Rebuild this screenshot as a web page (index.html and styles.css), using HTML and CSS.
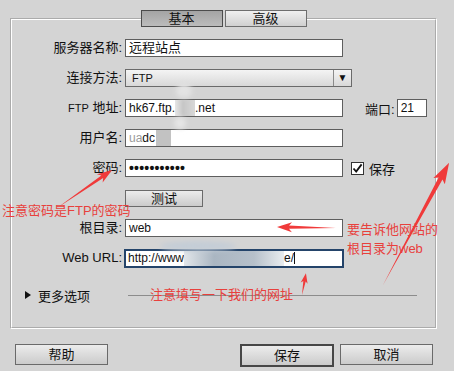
FILE: index.html
```html
<!DOCTYPE html>
<html>
<head>
  <meta charset="UTF-8">
  <title>站点设置 - 服务器</title>
  <link rel="stylesheet" href="styles.css">
</head>
<body>
  <div class="dialog">
    <fieldset class="panel">
      <legend class="tabs"><span class="tab tab-on">基本</span><span class="tab">高级</span></legend>

      <div class="form">
        <span class="lbl">服务器名称:</span>
        <div class="box cjk">远程站点</div>

        <span class="lbl">连接方法:</span>
        <div class="select">
          <span class="select-val">FTP</span>
          <span class="select-btn">&#9660;</span>
        </div>

        <span class="lbl"><small>FTP</small> 地址:</span>
        <div class="box">hk67.ftp.<span class="blot"></span>.net</div>
        <div class="extra port">
          <span>端口:</span>
          <div class="box box-port">21</div>
        </div>

        <span class="lbl">用户名:</span>
        <div class="box"><span class="faint">ua</span>dc<span class="blot blot-user"></span></div>

        <span class="lbl">密码:</span>
        <div class="box"><span class="dots">•••••••••••</span></div>
        <label class="extra check">
          <span class="check-box">
            <svg width="11" height="11" viewBox="0 0 11 11"><path d="M1.5 5.5 L4.2 8.6 L9.6 1.4" fill="none" stroke="#111" stroke-width="1.8"/></svg>
          </span>
          保存
        </label>

        <span class="lbl"></span>
        <button class="btn btn-test">测试</button>

        <span class="lbl">根目录:</span>
        <div class="box">web</div>

        <span class="lbl">Web URL:</span>
        <div class="box box-focus">http://www<span class="blot blot-url"></span>e/<span class="caret"></span></div>
      </div>

      <div class="more">
        <span class="tri"></span>
        <span class="more-text">更多选项</span>
        <span class="rule"></span>
      </div>
    </fieldset>

    <div class="actions">
      <button class="btn">帮助</button>
      <button class="btn btn-main">保存</button>
      <button class="btn">取消</button>
    </div>
  </div>

  <!-- red notes drawn over the screenshot -->
  <div class="notes">
    <svg class="marks" width="454" height="371" viewBox="0 0 454 371">
      <defs>
        <filter id="smear" x="-50%" y="-50%" width="200%" height="200%"><feGaussianBlur stdDeviation="2.5"/></filter>
      </defs>
      <g filter="url(#smear)">
        <ellipse cx="184" cy="91" rx="8" ry="7" fill="#e4e4e4"/>
        <ellipse cx="180" cy="123" rx="6" ry="6" fill="#e6e6e6"/>
        <ellipse cx="198" cy="246" rx="38" ry="5" fill="#c4cdd7"/>
      </g>
      <g fill="#f03a3a">
        <polygon transform="translate(57 208) rotate(-34.6)" points="0,0 55,-1.6 52,-5 67,0 52,5 55,1.6"/>
        <polygon transform="translate(336 228) rotate(181)" points="0,0 47,-1.6 44,-5 59,0 44,5 47,1.6"/>
        <polygon transform="translate(302 295) rotate(-79.7)" points="0,0 14,-1.2 12,-3.5 22,0 12,3.5 14,1.2"/>
        <polygon transform="translate(383 285) rotate(-61.6)" points="0,0 121,-2.2 118,-6.5 139,0 118,6.5 121,2.2"/>
      </g>
    </svg>
    <span class="note note-pass">注意密码是FTP的密码</span>
    <span class="note note-root">要告诉他网站的<br>根目录为web</span>
    <span class="note note-url">注意填写一下我们的网址</span>
  </div>
</body>
</html>
```

FILE: styles.css
```css
body {
  margin: 0;
  width: 454px;
  height: 371px;
  overflow: hidden;
  position: relative;
  background: #d4d4d4;
  color: #111;
  font-family: "Liberation Sans", "Noto Sans CJK SC", sans-serif;
  font-size: 13px;
}
button { font: inherit; color: inherit; padding: 0; }

.dialog { padding: 10px 17px 0 10px; }

/* --- PANEL + TABS --- */
.panel {
  margin: 0;
  padding: 12px 0 0 0;
  height: 319px;
  box-sizing: border-box;
  border: 2px groove #fff;
  min-width: 0;
}
.tabs { margin: 0 auto; padding: 0; font-size: 0; }
.tab {
  display: inline-block;
  width: 82px;
  height: 17px;
  box-sizing: border-box;
  border: 1px solid #6e6e6e;
  background: linear-gradient(#f0f0f0, #d0d0d0);
  font-size: 13px;
  line-height: 15px;
  text-align: center;
}
.tab + .tab { margin-left: 2px; }
.tab-on { background: linear-gradient(#a4a4a4, #bcbcbc); border-color: #4c4c4c; }

/* --- FORM --- */
.form {
  display: grid;
  grid-template-columns: 110px 218px 1fr;
  grid-auto-rows: 18px;
  column-gap: 3px;
  row-gap: 12px;
  align-items: center;
}
.lbl { grid-column: 1; text-align: right; line-height: 18px; white-space: nowrap; }
.lbl small { font-size: 11px; }
.box {
  height: 18px;
  box-sizing: border-box;
  border: 1px solid #5e5e5e;
  background: #fff;
  padding: 0 3px;
  font-size: 12px;
  line-height: 16px;
  white-space: nowrap;
  overflow: hidden;
}
.box.cjk { font-size: 13px; }
.box-focus { border: 2px solid #24446a; padding: 0 2px; line-height: 14px; margin: 0 -1px; height: 19px; }
.blot {
  display: inline-block;
  width: 20px;
  height: 16px;
  vertical-align: top;
  background: linear-gradient(90deg, #e6e6e6, #c6c6c6 40%, #d8d8d8);
}
.blot-user { width: 15px; margin-left: 1px; background: #c2c2c2; }
.blot-url { width: 100px; height: 15px; background: linear-gradient(90deg, #e2e6ea, #aab6c2 30%, #b6c0ca 70%, #e8ecef); }
.faint { color: #9a9a9a; }
.dots { font-size: 14px; font-weight: bold; letter-spacing: 0.2px; }
.caret { display: inline-block; width: 1px; height: 12px; background: #111; vertical-align: -2px; }

.select {
  grid-column: 2 / 4;
  width: 227px;
  height: 18px;
  box-sizing: border-box;
  border: 1px solid #6a6a6a;
  background: linear-gradient(#f4f4f4, #d8d8d8);
  display: flex;
  font-size: 11px;
  line-height: 16px;
}
.select-val { flex: 1; padding-left: 6px; }
.select-btn { width: 17px; border-left: 1px solid #8a8a8a; text-align: center; font-size: 10px; }

.extra { display: flex; align-items: center; }
.port { margin-left: 19px; gap: 2px; }
.box-port { width: 30px; }
.check { margin-left: 5px; gap: 5px; }
.check-box {
  width: 13px;
  height: 13px;
  box-sizing: border-box;
  border: 1px solid #333;
  background: #fff;
  display: flex;
  align-items: center;
  justify-content: center;
}

/* --- BUTTONS --- */
.btn {
  width: 93px;
  height: 21px;
  box-sizing: border-box;
  border: 1px solid #6a6a6a;
  background: linear-gradient(#ececec, #cbcbcb);
  line-height: 19px;
  text-align: center;
}
.btn-test { width: 78px; height: 17px; line-height: 15px; }
.actions { display: flex; gap: 6px; margin: 15px 4px 0 5px; }
.actions .btn-main { margin-left: auto; width: 94px; height: 23px; border: 2px solid #474747; }

.more { display: flex; align-items: center; height: 16px; margin-top: 20px; padding-left: 13px; }
.tri {
  width: 0;
  height: 0;
  border-left: 6px solid #111;
  border-top: 4px solid transparent;
  border-bottom: 4px solid transparent;
  margin-right: 7px;
}
.rule { flex: 1; height: 1px; background: #8c8c8c; margin: 0 18px 0 38px; }

/* --- NOTES --- */
.notes { position: absolute; left: 0; top: 0; width: 454px; height: 371px; pointer-events: none; }
.marks { position: absolute; left: 0; top: 0; }
.note {
  position: absolute;
  color: #e8403c;
  font-size: 13px;
  line-height: 19px;
  white-space: nowrap;
}
.note-pass { left: 2px; top: 201px; }
.note-root { left: 347px; top: 220px; }
.note-url { left: 150px; top: 285px; }
```
